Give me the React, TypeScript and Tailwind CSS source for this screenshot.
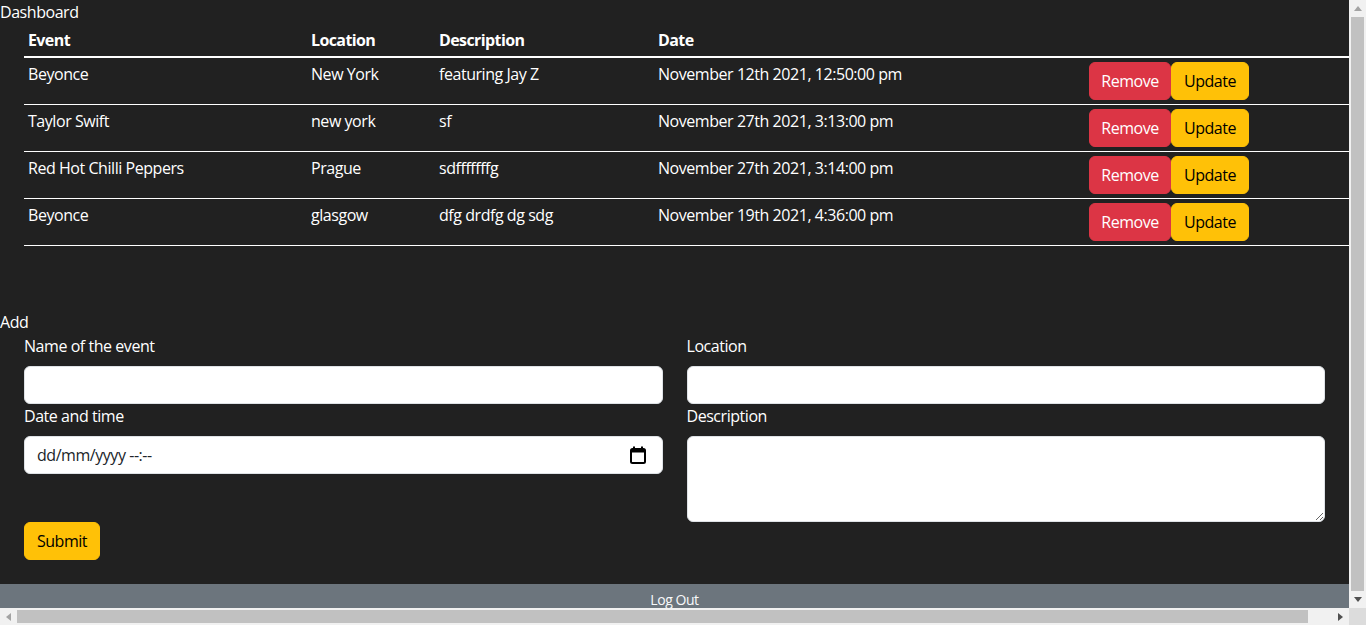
import React from "react";

const rows = [
  { e: "Beyonce", l: "New York", d: "featuring Jay Z", t: "November 12th 2021, 12:50:00 pm" },
  { e: "Taylor Swift", l: "new york", d: "sf", t: "November 27th 2021, 3:13:00 pm" },
  { e: "Red Hot Chilli Peppers", l: "Prague", d: "sdfffffffg", t: "November 27th 2021, 3:14:00 pm" },
  { e: "Beyonce", l: "glasgow", d: "dfg drdfg dg sdg", t: "November 19th 2021, 4:36:00 pm" },
];

function VScroll() {
  return (
    <div className="w-[17px] h-[608px] bg-[#f1f1f1] flex flex-col items-center">
      <div className="h-[17px] w-full flex items-center justify-center">
        <svg width="8" height="5" viewBox="0 0 8 5"><path d="M0 5 L4 0 L8 5 Z" fill="#a3a3a3" /></svg>
      </div>
      <div className="flex-1 w-[13px] bg-[#c1c1c1]" />
      <div className="h-[17px] w-full flex items-center justify-center">
        <svg width="8" height="5" viewBox="0 0 8 5"><path d="M0 0 L8 0 L4 5 Z" fill="#505050" /></svg>
      </div>
    </div>
  );
}

function HScroll() {
  return (
    <div className="h-[17px] w-[1366px] flex">
      <div className="w-[1349px] h-[17px] bg-[#f1f1f1] flex items-center">
        <div className="w-[17px] h-full flex items-center justify-center">
          <svg width="5" height="8" viewBox="0 0 5 8"><path d="M5 0 L0 4 L5 8 Z" fill="#a3a3a3" /></svg>
        </div>
        <div className="w-[1291px] h-[13px] bg-[#c1c1c1]" />
        <div className="flex-1" />
        <div className="w-[17px] h-full flex items-center justify-center">
          <svg width="5" height="8" viewBox="0 0 5 8"><path d="M0 0 L5 4 L0 8 Z" fill="#505050" /></svg>
        </div>
      </div>
      <div className="w-[17px] h-[17px] bg-[#dcdcdc]" />
    </div>
  );
}

function CalendarIcon() {
  return (
    <svg width="16" height="18" viewBox="0 0 16 18">
      <path d="M4 0.5v3M12 0.5v3" stroke="#000" strokeWidth="2" />
      <rect x="1" y="3" width="14" height="14" rx="1.5" fill="none" stroke="#000" strokeWidth="2" />
      <rect x="1" y="3" width="14" height="3.5" fill="#000" />
    </svg>
  );
}

export default function App() {
  return (
    <div
      className="w-[1366px] h-[625px] flex flex-col overflow-hidden bg-[#f1f1f1] tracking-[-0.45px]"
      style={{ fontFamily: '"Open Sans", "Noto Sans", sans-serif' }}
    >
      <div className="flex h-[608px]">
        <div className="w-[1349px] h-[608px] overflow-hidden bg-[#212121] text-white text-base leading-6">
          <div className="w-[1373px]">
            <div className="h-6">Dashboard</div>
            <table className="ml-6 w-[1349px] table-fixed border-collapse">
              <colgroup>
                <col className="w-[283px]" />
                <col className="w-[128px]" />
                <col className="w-[219px]" />
                <col className="w-[431px]" />
                <col />
              </colgroup>
              <thead>
                <tr className="border-b-2 border-white">
                  <th className="text-left font-bold px-1 py-1 tracking-[-0.6px]">Event</th>
                  <th className="text-left font-bold px-1 py-1 tracking-[-0.6px]">Location</th>
                  <th className="text-left font-bold px-1 py-1 tracking-[-0.6px]">Description</th>
                  <th className="text-left font-bold px-1 py-1 tracking-[-0.6px]">Date</th>
                  <th className="px-1 py-1"></th>
                </tr>
              </thead>
              <tbody>
                {rows.map((r, i) => (
                  <tr key={i} className="border-b border-white">
                    <td className="px-1 py-1 align-top">{r.e}</td>
                    <td className="px-1 py-1 align-top">{r.l}</td>
                    <td className="px-1 py-1 align-top">{r.d}</td>
                    <td className="px-1 py-1 align-top">{r.t}</td>
                    <td className="px-1 py-1 align-top">
                      <div className="flex">
                        <button className="h-[38px] w-[82px] rounded-md bg-[#dc3545] border border-[#dc3545] text-white">Remove</button>
                        <button className="h-[38px] w-[78px] rounded-md bg-[#ffc107] border border-[#ffc107] text-black">Update</button>
                      </div>
                    </td>
                  </tr>
                ))}
              </tbody>
            </table>
            <div className="h-[64px]" />
            <div className="h-6">Add</div>
            <div className="w-[1349px] px-6">
              <div className="grid grid-cols-2 gap-x-6">
                <div>
                  <div className="mb-2">Name of the event</div>
                  <input className="w-full h-[38px] bg-white border border-[#dee2e6] rounded-md px-3 text-[#212529] outline-none" />
                </div>
                <div>
                  <div className="mb-2">Location</div>
                  <input className="w-full h-[38px] bg-white border border-[#dee2e6] rounded-md px-3 text-[#212529] outline-none" />
                </div>
                <div>
                  <div className="mb-2">Date and time</div>
                  <div className="w-full h-[38px] bg-white border border-[#dee2e6] rounded-md pl-3 pr-4 text-[#212529] flex items-center justify-between">
                    <span>dd/mm/yyyy --:--</span>
                    <CalendarIcon />
                  </div>
                </div>
                <div>
                  <div className="mb-2">Description</div>
                  <textarea rows={3} className="block w-full h-[86px] bg-white border border-[#dee2e6] rounded-md px-3 py-1.5 text-[#212529] outline-none" />
                </div>
              </div>
              <button className="h-[38px] w-[76px] rounded-md bg-[#ffc107] border border-[#ffc107] text-black">Submit</button>
            </div>
            <div className="h-6" />
            <div className="w-[1349px] h-[32px] bg-[#6c757d] text-center text-sm leading-5 pt-[6px] text-[#f8f9fa]">Log Out</div>
          </div>
        </div>
        <VScroll />
      </div>
      <HScroll />
    </div>
  );
}
